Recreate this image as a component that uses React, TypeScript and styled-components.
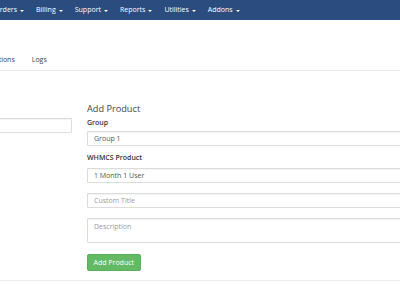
import styled, { createGlobalStyle } from 'styled-components'

const GlobalStyle = createGlobalStyle`
    html, body {
        margin: 0;
        padding: 0;
        background: #fff;
        overflow: hidden;
    }
    body {
        width: 400px;
        height: 284px;
        font-family: 'Open Sans', 'Liberation Sans', sans-serif;
        color: #333;
    }
    * {
        box-sizing: border-box;
    }
`

const Navbar = styled.nav`
    height: 20px;
    background: #2b4c7e;
    overflow: hidden;
`

const NavList = styled.ul`
    display: flex;
    margin: 0 0 0 -11.7px;
    padding: 0;
    list-style: none;
    height: 100%;
    align-items: center;
`

const NavItem = styled.li`
    padding: 0 6px;
    font-size: 7px;
    line-height: 20px;
    color: #fff;
    white-space: nowrap;
    display: flex;
    align-items: center;
`

const Caret = styled.span`
    display: inline-block;
    margin-left: 3px;
    margin-top: 1px;
    border-top: 2px solid #fff;
    border-left: 2px solid transparent;
    border-right: 2px solid transparent;
`

const TabsBar = styled.div`
    padding-top: 34px;
    padding-bottom: 4px;
    border-bottom: 1px solid #e6e6e6;
    overflow: hidden;
`

const TabList = styled.div`
    display: flex;
    margin-left: -33.1px;
`

const Tab = styled.a`
    padding: 0 8.5px;
    font-size: 7px;
    line-height: 12px;
    color: #34435e;
    white-space: nowrap;
    text-decoration: none;
`

const Content = styled.div`
    display: grid;
    grid-template-columns: 150px 400px;
    column-gap: 15px;
    margin-left: -78px;
    padding-top: 32px;
    height: 210px;
    border-bottom: 1px solid #ececec;
`

const LeftColumn = styled.div`
    padding-top: 15px;
`

const RightColumn = styled.div``

const Heading = styled.h3`
    margin: 0 0 3px;
    font-size: 9.2px;
    line-height: 12px;
    font-weight: 400;
    color: #444;
`

const FormGroup = styled.div<{ $gap?: number }>`
    margin-bottom: ${(p) => p.$gap ?? 10}px;
`

const Label = styled.label<{ $gap?: number }>`
    display: block;
    margin-bottom: ${(p) => p.$gap ?? 3}px;
    font-size: 7px;
    line-height: 10px;
    font-weight: 600;
    color: #333;
`

const fieldCss = `
    display: block;
    width: 100%;
    height: 15px;
    padding: 0 6px;
    font-family: 'Open Sans', 'Liberation Sans', sans-serif;
    font-size: 7px;
    color: #555;
    background: #fff;
    border: 1px solid #dcdcdc;
    border-radius: 1px;
    box-shadow: inset 0 1px 1px rgba(0, 0, 0, 0.05);
    outline: none;
    &::placeholder {
        color: #9a9a9a;
    }
`

const Input = styled.input`
    ${fieldCss}
`

const Select = styled.select`
    ${fieldCss}
    appearance: none;
`

const TextArea = styled.textarea`
    ${fieldCss}
    height: 25px;
    padding-top: 3px;
    resize: none;
    line-height: 10px;
`

const Button = styled.button`
    display: block;
    height: 17px;
    padding: 0 5.5px;
    font-family: 'Open Sans', 'Liberation Sans', sans-serif;
    font-size: 7px;
    color: #fff;
    background: #64b964;
    border: 1px solid #5aaf5a;
    border-radius: 2px;
`

const navItems = ['Orders', 'Billing', 'Support', 'Reports', 'Utilities', 'Addons']

export default function App() {
    return (
        <>
            <GlobalStyle />
            <Navbar>
                <NavList>
                    {navItems.map((item) => (
                        <NavItem key={item}>
                            {item}
                            <Caret />
                        </NavItem>
                    ))}
                </NavList>
            </Navbar>
            <TabsBar>
                <TabList>
                    <Tab>Integrations</Tab>
                    <Tab>Logs</Tab>
                </TabList>
            </TabsBar>
            <Content>
                <LeftColumn>
                    <Input type="text" />
                </LeftColumn>
                <RightColumn>
                    <Heading>Add Product</Heading>
                    <FormGroup $gap={7}>
                        <Label>Group</Label>
                        <Select defaultValue="1">
                            <option value="1">Group 1</option>
                        </Select>
                    </FormGroup>
                    <FormGroup>
                        <Label $gap={5}>WHMCS Product</Label>
                        <Select defaultValue="1">
                            <option value="1">1 Month 1 User</option>
                        </Select>
                    </FormGroup>
                    <FormGroup>
                        <Input type="text" placeholder="Custom Title" />
                    </FormGroup>
                    <FormGroup $gap={11}>
                        <TextArea placeholder="Description" />
                    </FormGroup>
                    <Button type="button">Add Product</Button>
                </RightColumn>
            </Content>
        </>
    )
}
